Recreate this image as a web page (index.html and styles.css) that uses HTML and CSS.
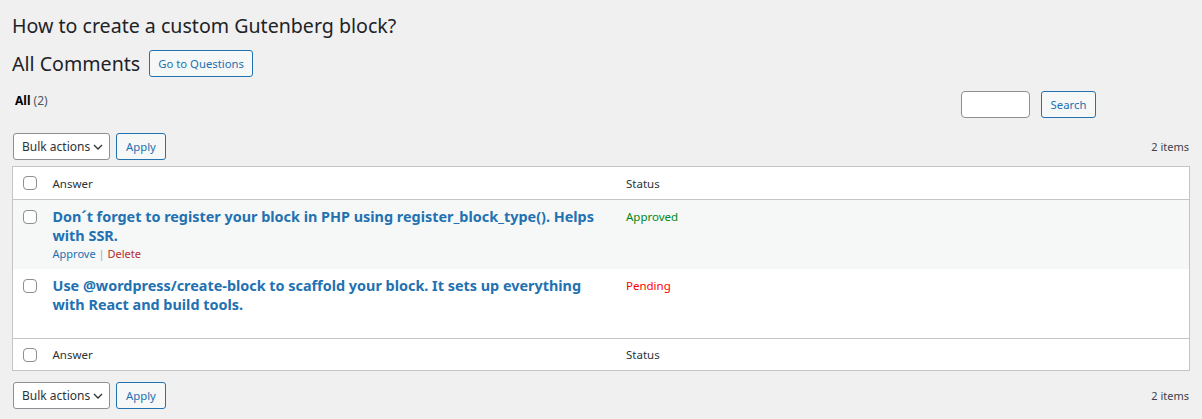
FILE: index.html
```html
<!DOCTYPE html>
<html lang="en">
<head>
<meta charset="utf-8">
<title>All Comments</title>
<link rel="stylesheet" href="styles.css">
</head>
<body>
<div class="wrap">
  <h1 class="page-title">How to create a custom Gutenberg block?</h1>
  <div class="heading-row">
    <h2 class="heading-inline">All Comments</h2>
    <a class="btn btn-outline" href="#">Go to Questions</a>
  </div>
  <div class="filter-row">
    <ul class="subsubsub">
      <li><span class="current">All</span> <span class="count">(2)</span></li>
    </ul>
    <form class="search-box">
      <input class="search-input" type="search" aria-label="Search">
      <button class="btn btn-outline" type="button">Search</button>
    </form>
  </div>
  <div class="tablenav">
    <div class="bulk">
      <div class="select">Bulk actions <svg class="chev" width="10" height="6" viewBox="0 0 10 6"><path d="M1 1l4 4 4-4" fill="none" stroke="#2c3338" stroke-width="1.3"/></svg></div>
      <button class="btn btn-outline" type="button">Apply</button>
    </div>
    <div class="items">2 items</div>
  </div>
  <table class="list">
    <colgroup><col class="c-cb"><col><col></colgroup>
    <thead>
      <tr><td class="cb"><span class="check"></span></td><th>Answer</th><th>Status</th></tr>
    </thead>
    <tbody>
      <tr class="alt">
        <td class="cb"><span class="check"></span></td>
        <td>
          <a class="answer" href="#">Don´t forget to register your block in PHP using register_block_type(). Helps with SSR.</a>
          <div class="row-actions"><a class="approve" href="#">Approve</a> <span class="sep">|</span> <a class="delete" href="#">Delete</a></div>
        </td>
        <td><span class="approved">Approved</span></td>
      </tr>
      <tr>
        <td class="cb"><span class="check"></span></td>
        <td>
          <a class="answer" href="#">Use @wordpress/create-block to scaffold your block. It sets up everything with React and build tools.</a>
          <div class="row-actions hidden"><a class="approve" href="#">Approve</a> <span class="sep">|</span> <a class="delete" href="#">Delete</a></div>
        </td>
        <td><span class="pending">Pending</span></td>
      </tr>
    </tbody>
    <tfoot>
      <tr><td class="cb"><span class="check"></span></td><th>Answer</th><th>Status</th></tr>
    </tfoot>
  </table>
  <div class="tablenav bottom">
    <div class="bulk">
      <div class="select">Bulk actions <svg class="chev" width="10" height="6" viewBox="0 0 10 6"><path d="M1 1l4 4 4-4" fill="none" stroke="#2c3338" stroke-width="1.3"/></svg></div>
      <button class="btn btn-outline" type="button">Apply</button>
    </div>
    <div class="items">2 items</div>
  </div>
</div>
</body>
</html>
```
FILE: styles.css
```css
* { box-sizing: border-box; }
html, body { margin: 0; padding: 0; }
body {
  background: #f0f0f1;
  color: #3c434a;
  font-family: "Noto Sans", "Open Sans", sans-serif;
  font-size: 12px;
}
.wrap { padding: 0 12px 0 12px; }
.page-title {
  margin: 0;
  padding-top: 13px;
  font-size: 19.6px;
  line-height: 26px;
  font-weight: 400;
  color: #1d2327;
}
.heading-row {
  display: flex;
  align-items: center;
  gap: 9px;
  margin-top: 11px;
}
.heading-inline {
  margin: 0;
  font-size: 19.6px;
  line-height: 26px;
  font-weight: 400;
  color: #1d2327;
}
.btn {
  display: inline-flex;
  align-items: center;
  justify-content: center;
  height: 27px;
  padding: 0 8px;
  font: inherit;
  font-size: 11.3px;
  border-radius: 3px;
  text-decoration: none;
  cursor: pointer;
}
.btn-outline {
  background: #f6f7f7;
  border: 1px solid #2271b1;
  color: #2271b1;
}
.filter-row {
  display: flex;
  align-items: flex-start;
  justify-content: space-between;
  margin-top: 14px;
  height: 27px;
}
.subsubsub {
  list-style: none;
  margin: 0;
  padding: 1px 0 0 3px;
  font-size: 12px;
  line-height: 18px;
}
.subsubsub .current { font-weight: 700; color: #000; }
.subsubsub .count { color: #50575e; }
.search-box {
  display: flex;
  gap: 11px;
  margin: 0 94px 0 0;
}
.search-box .btn { width: 55px; padding: 0; }
.search-input {
  width: 69px;
  height: 27px;
  border: 1px solid #8c8f94;
  border-radius: 4px;
  background: #fff;
  margin: 0;
}
.tablenav {
  display: flex;
  align-items: center;
  justify-content: space-between;
  height: 27px;
  margin-top: 15px;
  margin-bottom: 6px;
}
.tablenav.bottom { margin-top: 11px; }
.bulk { display: flex; gap: 6px; padding-left: 1px; }
.bulk .btn { width: 50px; padding: 0; }
.select {
  display: flex;
  align-items: center;
  justify-content: space-between;
  width: 97px;
  height: 27px;
  padding: 0 6px 0 8px;
  background: #fff;
  border: 1px solid #8c8f94;
  border-radius: 3px;
  color: #2c3338;
  font-size: 12px;
}
.chev { display: block; }
.items { font-size: 11px; color: #3c434a; padding-right: 1px; }
.list {
  width: 100%;
  border-collapse: collapse;
  table-layout: fixed;
  background: #fff;
  border: 1px solid #c3c4c7;
}
.c-cb { width: 30px; }
.list th, .list td {
  text-align: left;
  vertical-align: top;
  font-weight: 400;
}
.list thead th, .list tfoot th, .list thead td, .list tfoot td {
  height: 33px;
  padding: 8px 10px 6px;
  line-height: 18px;
  color: #2c3338;
  font-size: 11.5px;
}
.list tfoot th, .list tfoot td { height: 32px; padding-top: 7px; }
.list thead tr { border-bottom: 1px solid #c3c4c7; }
.list tfoot tr { border-top: 1px solid #c3c4c7; }
.list tbody td {
  padding: 7px 10px 7px;
  font-size: 11.5px;
  line-height: 19px;
}
.list tbody tr.alt { background: #f6f7f7; }
.list td.cb { padding: 0 0 0 10px; vertical-align: middle; }
.list tbody td.cb { padding-top: 10px; vertical-align: top; }
.check {
  display: block;
  width: 14px;
  height: 14px;
  border: 1px solid #8c8f94;
  border-radius: 4px;
  background: #fff;
}
.answer {
  color: #2271b1;
  font-weight: 700;
  font-size: 14.4px;
  text-decoration: none;
  display: block;
}
.row-actions {
  padding-top: 1px;
  font-size: 11px;
  line-height: 16px;
}
.row-actions.hidden { visibility: hidden; }
.row-actions a { text-decoration: none; }
.approve { color: #2271b1; }
.delete { color: #b32d2e; }
.sep { color: #a7aaad; }
.approved { color: #008a20; }
.pending { color: #f00; }
```
